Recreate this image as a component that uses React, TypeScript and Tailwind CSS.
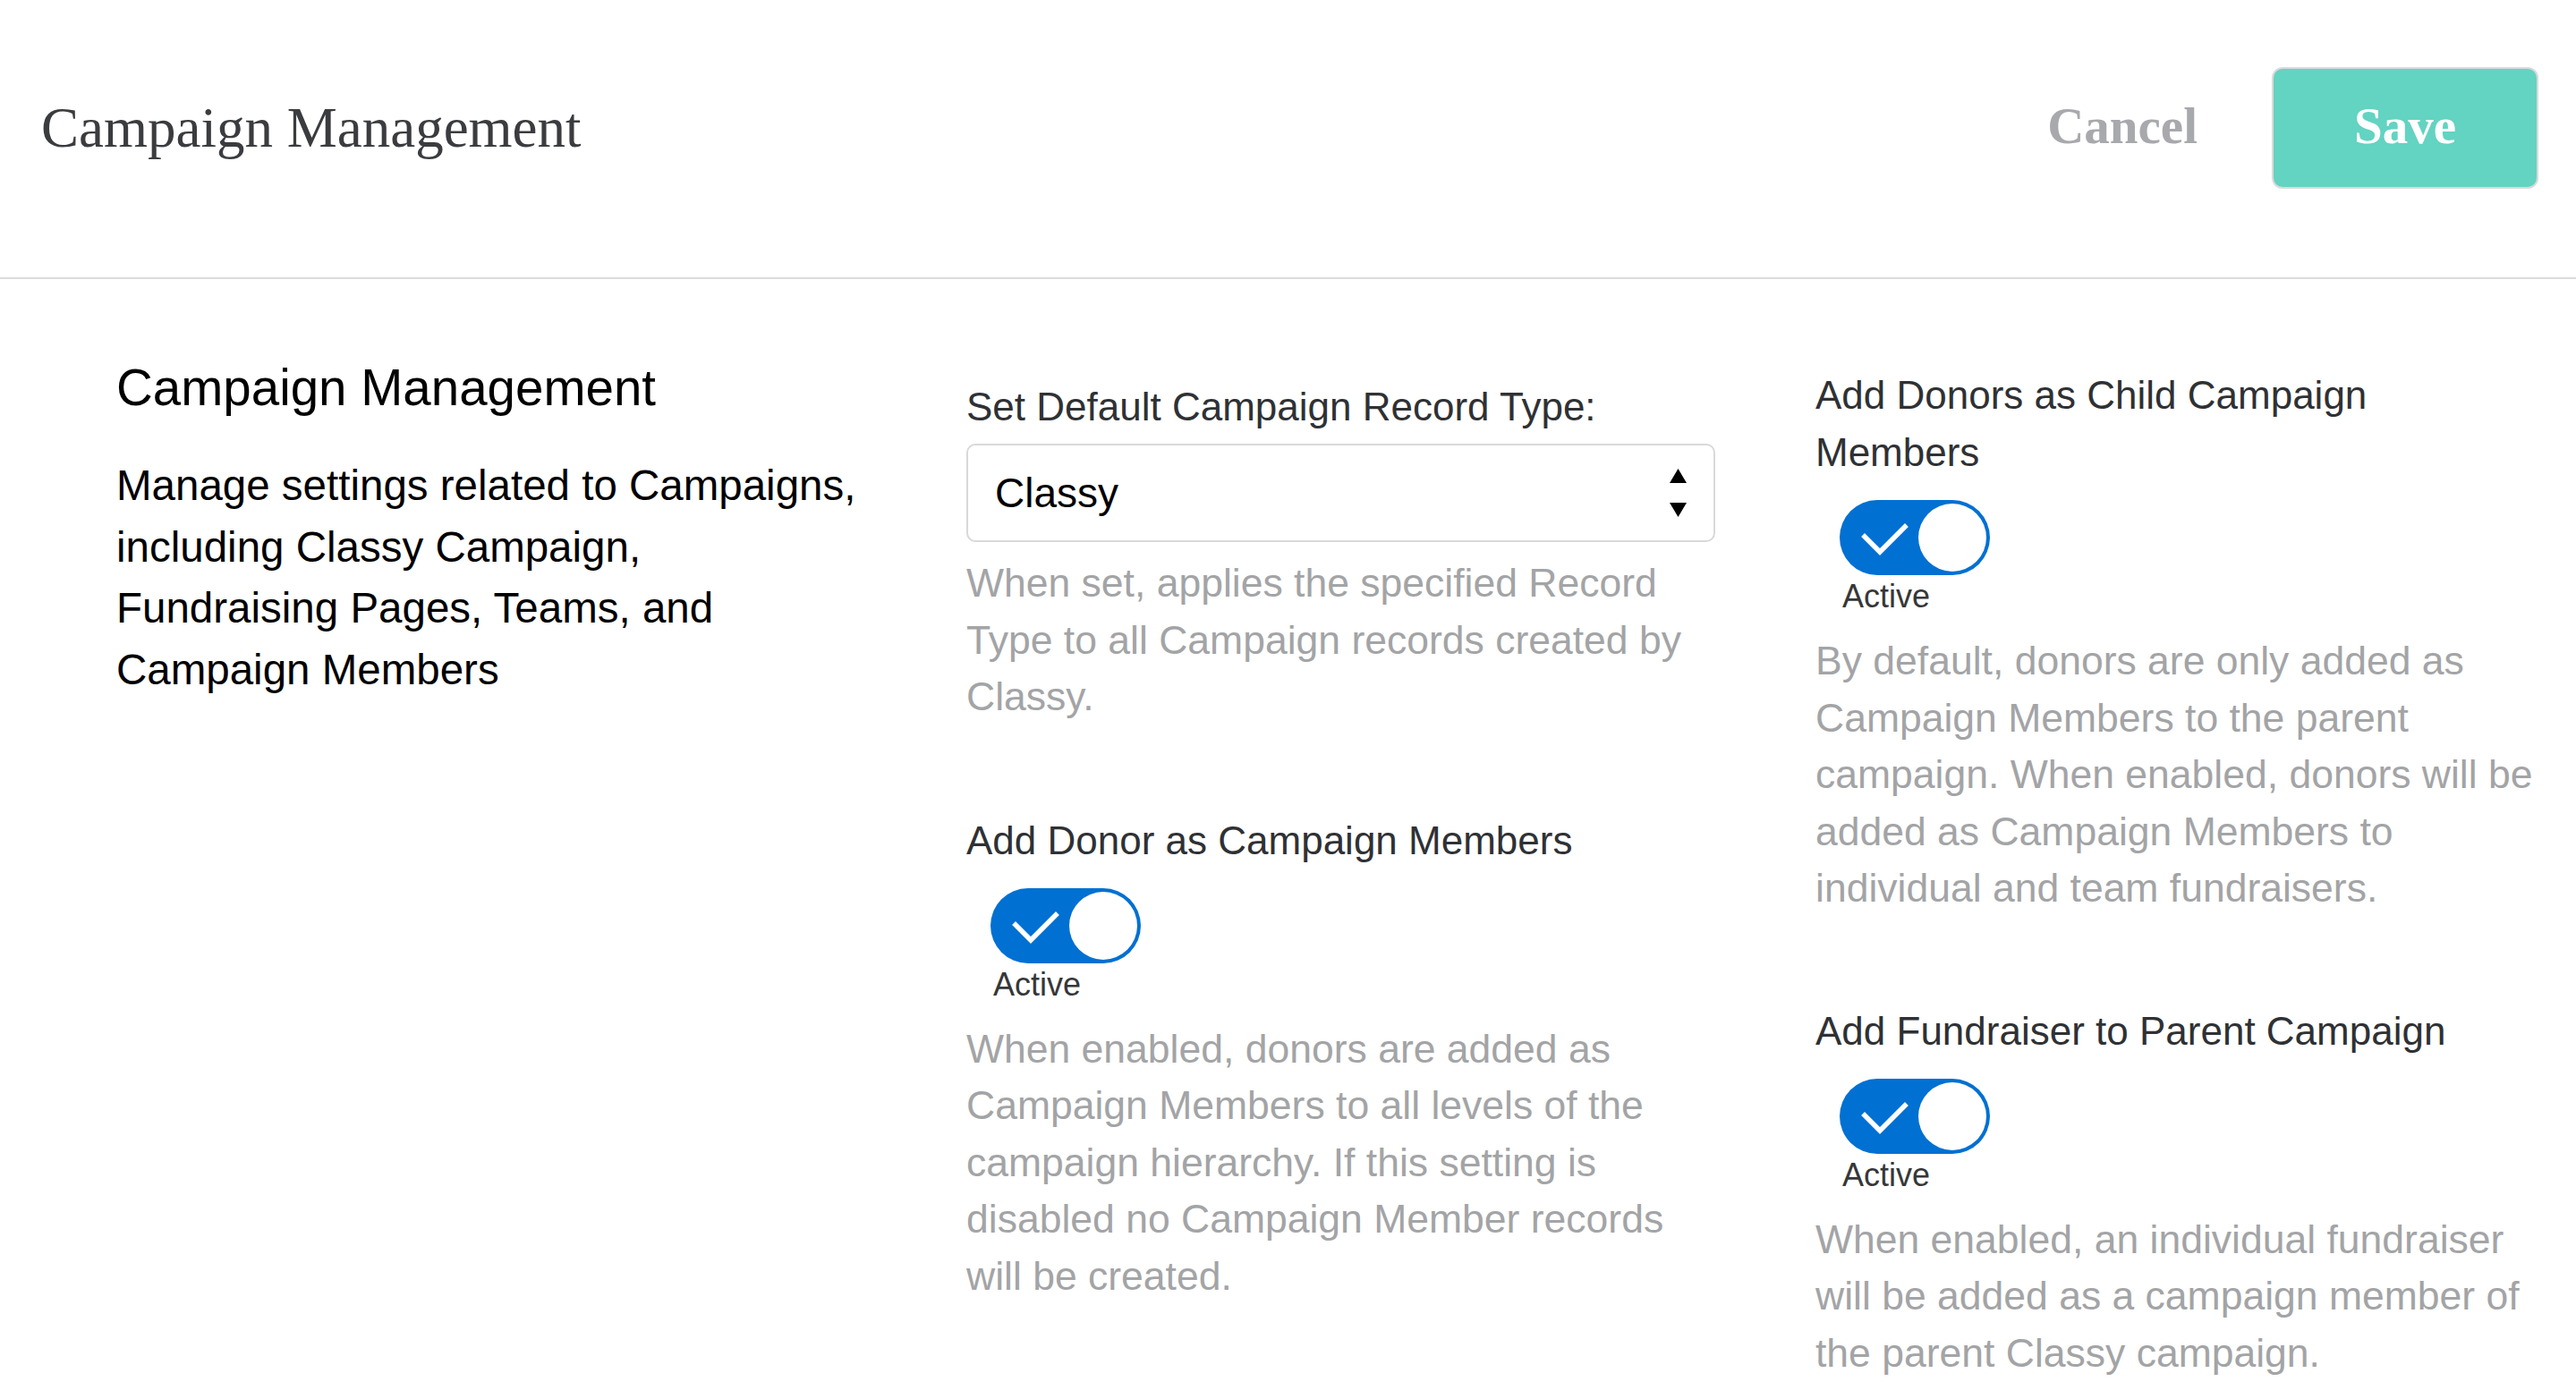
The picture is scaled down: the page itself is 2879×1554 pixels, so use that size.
import React from "react";

function Toggle() {
  return (
    <div className="relative w-[168px] h-[84px] rounded-full bg-[#0070d2]">
      <svg className="absolute inset-0" width="168" height="84" viewBox="0 0 168 84" fill="none">
        <polyline points="28,41 45,58 73,30" stroke="#ffffff" strokeWidth="5.5" strokeLinecap="square" strokeLinejoin="miter" />
      </svg>
      <div className="absolute right-[4px] top-[4px] w-[76px] h-[76px] rounded-full bg-white" />
    </div>
  );
}

function ToggleBlock() {
  return (
    <div className="flex flex-col">
      <div className="mt-[21px] ml-[27px]">
        <Toggle />
      </div>
      <div className="mt-[2px] ml-[30px] text-[36px] leading-[44px] text-[#363739]">Active</div>
    </div>
  );
}

function Desc({ lines, className = "" }: { lines: string[]; className?: string }) {
  return (
    <p className={"text-[44.5px] leading-[63.5px] text-[#a3a4a6] whitespace-nowrap " + className}>
      {lines.map((l, i) => (
        <React.Fragment key={i}>
          {l}
          {i < lines.length - 1 && <br />}
        </React.Fragment>
      ))}
    </p>
  );
}

function Label({ lines, className = "" }: { lines: string[]; className?: string }) {
  return (
    <div className={"text-[44px] leading-[64px] text-[#2f3134] whitespace-nowrap " + className}>
      {lines.map((l, i) => (
        <React.Fragment key={i}>
          {l}
          {i < lines.length - 1 && <br />}
        </React.Fragment>
      ))}
    </div>
  );
}

export default function App() {
  return (
    <div className="min-h-screen w-full bg-white font-['Liberation_Sans',Arial,sans-serif]">
      <header className="flex items-center justify-between border-b-2 border-[#dcdcdc] pt-[75px] pb-[99px] pl-[46px] pr-[42px]">
        <h1 className="font-['Liberation_Serif','Times_New_Roman',serif] text-[63px] leading-none text-[#3a3c3f]">
          Campaign Management
        </h1>
        <div className="flex items-center gap-[83px]">
          <button className="pb-[6px] font-['Liberation_Serif','Times_New_Roman',serif] font-bold text-[57px] leading-none text-[#a8a9ad]">
            Cancel
          </button>
          <button className="flex h-[136px] w-[298px] items-center justify-center rounded-[12px] border-2 border-[#dadada] bg-[#63d3c2] pb-[6px] font-['Liberation_Serif','Times_New_Roman',serif] font-bold text-[57px] leading-none text-white">
            Save
          </button>
        </div>
      </header>

      <main className="flex items-start">
        {/* Left column */}
        <section className="ml-[130px] w-[835px] shrink-0 pt-[88px]">
          <h2 className="text-[56.5px] leading-[67px] text-black whitespace-nowrap">Campaign Management</h2>
          <p className="mt-[42px] text-[47.5px] leading-[68.7px] text-black whitespace-nowrap">
            Manage settings related to Campaigns,
            <br />
            including Classy Campaign,
            <br />
            Fundraising Pages, Teams, and
            <br />
            Campaign Members
          </p>
        </section>

        {/* Middle column */}
        <section className="ml-[115px] w-[837px] shrink-0 pt-[111px]">
          <Label lines={["Set Default Campaign Record Type:"]} />
          <div className="mt-[9px] flex h-[110px] items-center justify-between rounded-[10px] border-2 border-[#d9d9d9] pl-[30px] pr-[30px]">
            <span className="text-[46px] leading-none text-black">Classy</span>
            <svg width="19" height="54" viewBox="0 0 19 54" fill="#000000">
              <polygon points="9.5,0 19,16 0,16" />
              <polygon points="0,38 19,38 9.5,54" />
            </svg>
          </div>
          <Desc
            className="mt-[14px]"
            lines={[
              "When set, applies the specified Record",
              "Type to all Campaign records created by",
              "Classy.",
            ]}
          />

          <Label className="mt-[97px]" lines={["Add Donor as Campaign Members"]} />
          <ToggleBlock />
          <Desc
            className="mt-[18px]"
            lines={[
              "When enabled, donors are added as",
              "Campaign Members to all levels of the",
              "campaign hierarchy. If this setting is",
              "disabled no Campaign Member records",
              "will be created.",
            ]}
          />
        </section>

        {/* Right column */}
        <section className="ml-[112px] w-[807px] shrink-0 pt-[98px]">
          <Label lines={["Add Donors as Child Campaign", "Members"]} />
          <ToggleBlock />
          <Desc
            className="mt-[18px]"
            lines={[
              "By default, donors are only added as",
              "Campaign Members to the parent",
              "campaign. When enabled, donors will be",
              "added as Campaign Members to",
              "individual and team fundraisers.",
            ]}
          />

          <Label className="mt-[96px]" lines={["Add Fundraiser to Parent Campaign"]} />
          <ToggleBlock />
          <Desc
            className="mt-[18px]"
            lines={[
              "When enabled, an individual fundraiser",
              "will be added as a campaign member of",
              "the parent Classy campaign.",
            ]}
          />
        </section>
      </main>
    </div>
  );
}
